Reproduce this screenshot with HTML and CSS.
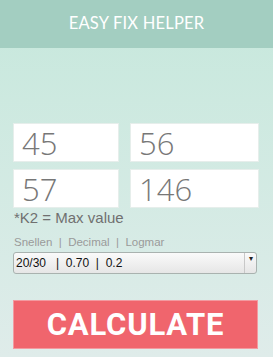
FILE: index.html
```html
<!DOCTYPE html>
<html lang="en">
<head>
    <meta charset="UTF-8">
    <meta name="viewport" content="width=device-width, initial-scale=1.0">
    <title>Easy Fix Helper</title>
    <link rel="stylesheet" href="styles.css">
</head>
<body>

<header class="topbar">EASY FIX HELPER</header>

<main class="content">
    <div class="grid">
        <input class="field" type="text" value="45">
        <input class="field" type="text" value="56">
        <input class="field" type="text" value="57">
        <input class="field" type="text" value="146">
    </div>
    <p class="note">*K2 = Max value</p>

    <p class="hint">Snellen &nbsp;|&nbsp; Decimal &nbsp;|&nbsp; Logmar</p>
    <div class="select">
        <span class="select-text">20/30 &nbsp;&nbsp;| &nbsp;0.70 &nbsp;| &nbsp;0.2</span>
        <span class="select-arrow">&#9662;</span>
    </div>

    <button class="calc" type="button">CALCULATE</button>
</main>

</body>
</html>
```
FILE: styles.css
```css
html, body { margin: 0; padding: 0; }
body {
    width: 273px; height: 357px; overflow: hidden;
    font-family: "Liberation Sans", Arial, sans-serif;
    background: linear-gradient(#c6e8dc, #dfecea);
}
.topbar {
    height: 48px; line-height: 47px;
    background-color: #a3cec1; color: #fff;
    text-align: center; font-family: Lato, sans-serif;
    font-weight: 400; font-size: 16.5px; letter-spacing: 0.2px;
}
.content { padding: 75px 14px 0 13px; }
.grid {
    display: grid; grid-template-columns: 106px 129px;
    column-gap: 11px; row-gap: 7px;
}
.field {
    box-sizing: border-box; width: 100%; height: 39px;
    border: 1px solid #e6eeeb; background: #fff; margin: 0;
    padding: 0 0 0 8px; color: #777;
    font-family: "Open Sans", sans-serif; font-weight: 300; font-size: 31px;
    outline: none;
}
.note { margin: 1px 0 0 1px; color: #707070; font-size: 15px; line-height: 18px; }
.hint { margin: 8px 0 0 1px; color: #9a9a9a; font-size: 11.5px; line-height: 15px; }
.select {
    display: flex; box-sizing: border-box; height: 22px; width: 244px; margin-top: 2px;
    border: 1px solid #a9b2af; border-radius: 3px;
    background: linear-gradient(#fafafa, #e6e6e6);
}
.select-text { flex: 1; padding-left: 2px; line-height: 20px; font-size: 12px; color: #111; }
.select-arrow {
    width: 11px; border-left: 1px solid #c8c8c8;
    font-size: 8px; line-height: 12px; text-align: center; color: #222;
}
.calc {
    display: block; box-sizing: border-box; width: 245px; height: 49px; margin-top: 26px;
    background-color: #f0656d; border: 1px solid #f39aa0; color: #fff;
    font-family: Roboto, sans-serif; font-weight: 700; font-size: 31px;
    letter-spacing: 0.8px; padding: 0; cursor: pointer;
}
```
